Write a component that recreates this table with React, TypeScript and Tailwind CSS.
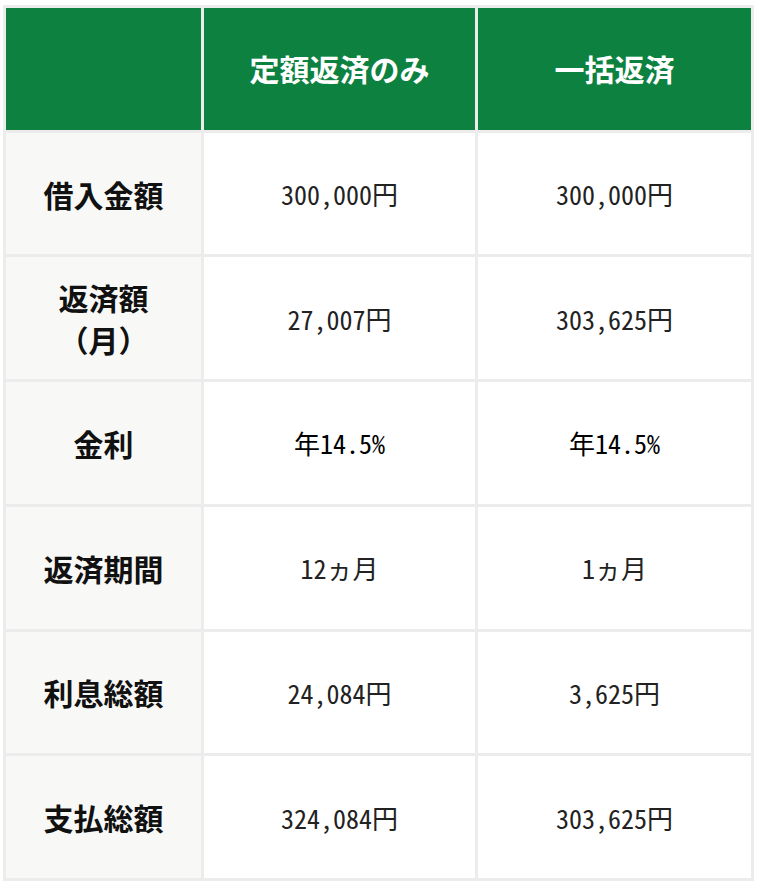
import React from "react";

interface Row {
  label: React.ReactNode;
  fixed: string;
  lump: string;
  strong?: boolean;
}

const rows: Row[] = [
  { label: "借入金額", fixed: "300,000円", lump: "300,000円" },
  {
    label: (
      <>
        返済額
        <br />
        （月）
      </>
    ),
    fixed: "27,007円",
    lump: "303,625円",
  },
  { label: "金利", fixed: "年14.5%", lump: "年14.5%", strong: true },
  { label: "返済期間", fixed: "12ヵ月", lump: "1ヵ月" },
  { label: "利息総額", fixed: "24,084円", lump: "3,625円" },
  { label: "支払総額", fixed: "324,084円", lump: "303,625円" },
];

const font = "[font-family:'Noto_Sans_CJK_JP','Noto_Sans',sans-serif]";

export default function App() {
  return (
    <div className={`bg-white w-[760px] h-[889px] pt-[5px] pl-[3px] ${font}`}>
      <div className="w-[751px] h-[876px] bg-[#ececec] p-[3px] grid grid-cols-[195px_271px_1fr] grid-rows-7 gap-[3px]">
        <div className="bg-[#0c8140]" />
        <div className="bg-[#0c8140] flex items-center justify-center text-white font-bold text-[30px]">
          定額返済のみ
        </div>
        <div className="bg-[#0c8140] flex items-center justify-center text-white font-bold text-[30px]">
          一括返済
        </div>
        {rows.map((r, i) => (
          <React.Fragment key={i}>
            <div className="bg-[#f8f9f7] flex items-center justify-center text-center font-bold text-[30px] leading-[42px] text-[#111]">
              <div>{r.label}</div>
            </div>
            <div
              className={`bg-white flex items-center justify-center text-[26px] [font-feature-settings:'hwid'] ${
                r.strong ? "text-black" : "text-[#222]"
              }`}
            >
              {r.fixed}
            </div>
            <div
              className={`bg-white flex items-center justify-center text-[26px] [font-feature-settings:'hwid'] ${
                r.strong ? "text-black" : "text-[#222]"
              }`}
            >
              {r.lump}
            </div>
          </React.Fragment>
        ))}
      </div>
    </div>
  );
}
